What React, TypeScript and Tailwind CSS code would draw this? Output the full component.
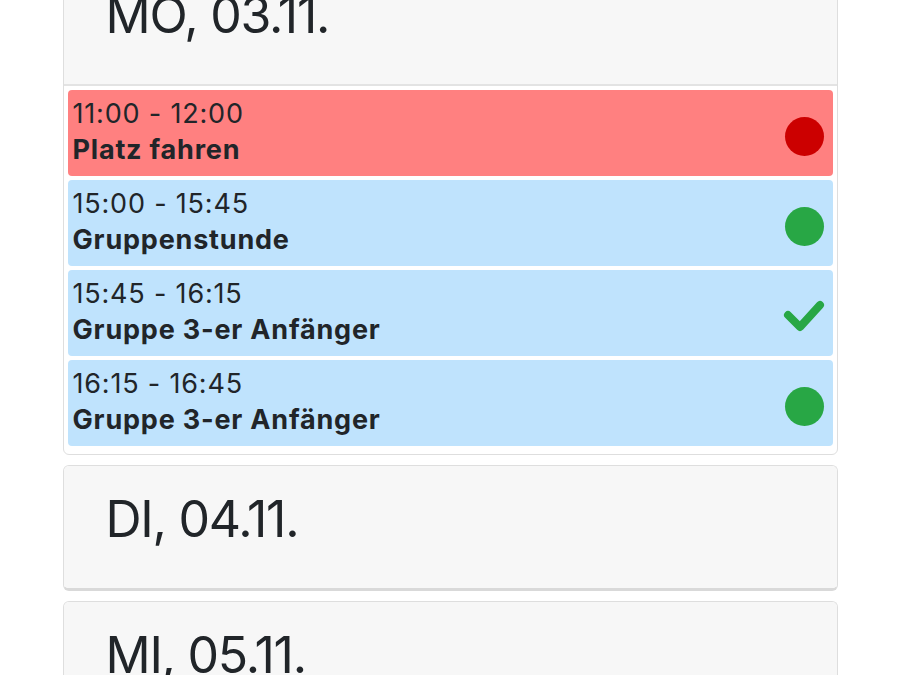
import React from "react";

type Status = "busy" | "free" | "booked";

const events: { time: string; title: string; tone: "red" | "blue"; status: Status }[] = [
  { time: "11:00 - 12:00", title: "Platz fahren", tone: "red", status: "busy" },
  { time: "15:00 - 15:45", title: "Gruppenstunde", tone: "blue", status: "free" },
  { time: "15:45 - 16:15", title: "Gruppe 3-er Anfänger", tone: "blue", status: "booked" },
  { time: "16:15 - 16:45", title: "Gruppe 3-er Anfänger", tone: "blue", status: "free" }
];

const StatusIcon = ({ status }: { status: Status }) => {
  if (status === "booked") {
    return (
      <svg width="42" height="34" viewBox="0 0 42 34" className="shrink-0 -mr-[1px]">
        <polyline
          points="5,16 17,28 37,6"
          fill="none"
          stroke="#28a745"
          strokeWidth="8"
          strokeLinecap="round"
          strokeLinejoin="round"
        />
      </svg>
    );
  }
  return (
    <div
      className={
        status === "busy"
          ? "w-[39px] h-[39px] rounded-full bg-[#cc0000] shrink-0"
          : "w-[39px] h-[39px] rounded-full bg-[#28a745] shrink-0"
      }
    />
  );
};

const DayHeader = ({ label }: { label: string }) => (
  <div className="h-[122px] bg-[#f7f7f7] pl-[42px] pt-[23px] text-[50px] leading-[60px] tracking-[-0.025em] text-[#212529]">
    {label}
  </div>
);

const App = () => {
  return (
    <div
      className="w-[900px] h-[675px] overflow-hidden bg-white"
      style={{ fontFamily: "Inter, 'Noto Sans', sans-serif" }}
    >
      <div className="w-[775px] mx-auto -mt-[39px] flex flex-col gap-[10px]">
        {/* monday, expanded */}
        <div className="border border-[#dedede] rounded-[6px] overflow-hidden bg-white">
          <div className="border-b-2 border-[#e3e3e3]">
            <DayHeader label="MO, 03.11." />
          </div>
          <div className="pt-[4px] px-[4px] pb-[8px] flex flex-col gap-[4px]">
            {events.map((ev, i) => (
              <div
                key={i}
                className={
                  (ev.tone === "red" ? "bg-[#ff8080]" : "bg-[#bfe3fd]") +
                  " h-[86px] rounded-[4px] pl-[5px] pr-[9px] pt-[6px] flex items-start justify-between text-[#212529]"
                }
              >
                <div className="flex flex-col text-[27px] leading-[36px] tracking-[0.03em]">
                  <span>{ev.time}</span>
                  <span className="font-bold">{ev.title}</span>
                </div>
                <div className="self-center flex items-center">
                  <StatusIcon status={ev.status} />
                </div>
              </div>
            ))}
          </div>
        </div>
        {/* collapsed days */}
        {["DI, 04.11.", "MI, 05.11."].map((d) => (
          <div
            key={d}
            className="border border-[#dedede] border-b-[3px] border-b-[#d9d9d9] rounded-[6px] overflow-hidden"
          >
            <DayHeader label={d} />
          </div>
        ))}
      </div>
    </div>
  );
};

export default App;
